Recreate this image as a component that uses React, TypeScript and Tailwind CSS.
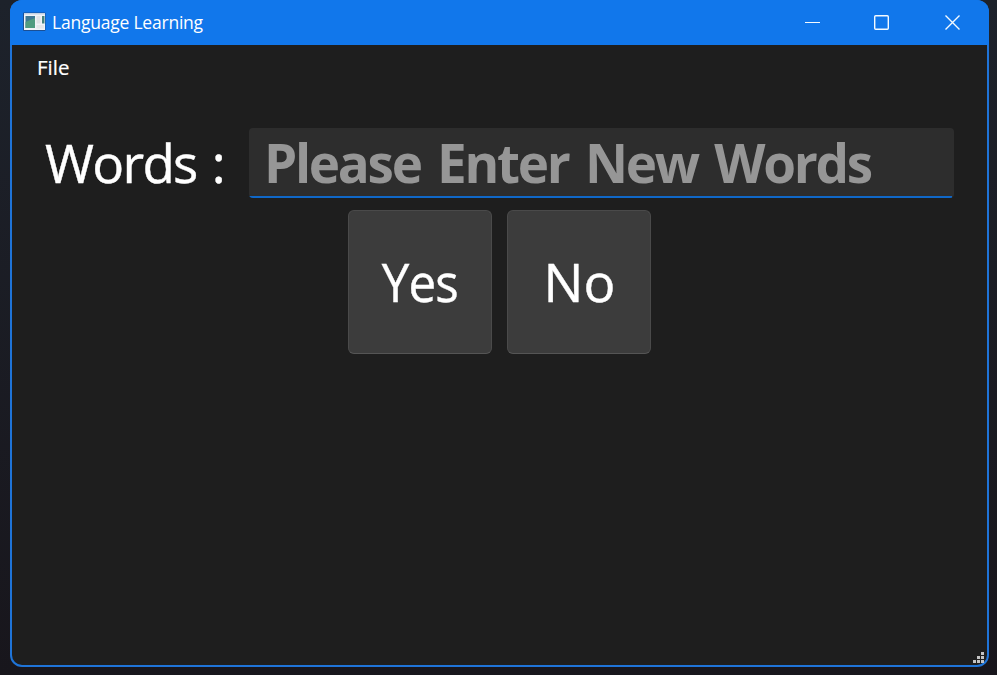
import React from "react";

function AppIcon() {
  return (
    <svg width="24" height="20" viewBox="0 0 24 20" className="shrink-0">
      <rect x="0" y="0.5" width="22.5" height="18.5" rx="1" fill="#1b4f94" />
      <rect x="1" y="1" width="21" height="17" fill="#f0f3f7" />
      <rect x="1" y="1" width="21" height="1.5" fill="#c3d2e4" />
      <rect x="2.5" y="4" width="9.5" height="12" fill="#3d7894" />
      <path d="M2.5 16V10L12 6v10z" fill="#4f9c80" />
      <rect x="13.5" y="4" width="4" height="7.5" fill="#e0e3e7" />
      <rect x="19" y="4" width="2.5" height="7.5" fill="#46837c" />
      <rect x="13.5" y="13" width="7.5" height="3.5" fill="#e4e7ea" />
    </svg>
  );
}

function TitleBar() {
  return (
    <header className="flex h-[45px] shrink-0 items-start bg-[#1177eb] pl-[13px] text-white">
      <div className="flex h-[45px] flex-1 items-start pt-[12px]">
        <AppIcon />
        <span className="ml-[5px] mt-[-2px] whitespace-nowrap text-[17.5px] leading-6 tracking-[-0.22px]">
          Language Learning
        </span>
      </div>
      <svg width="185" height="45" viewBox="0 0 185 45" fill="none" stroke="#f4faff">
        <path d="M1 22.5h15" />
        <rect x="70.7" y="15.7" width="13.6" height="13.6" rx="1" strokeWidth="1.4" />
        <path d="M141.5 15.5l14 14m0-14l-14 14" strokeWidth="1.4" />
      </svg>
    </header>
  );
}

function ChoiceButton({ children, textClass }: { children: React.ReactNode; textClass: string }) {
  return (
    <button className="flex h-36 w-36 items-center justify-center rounded-[6px] border border-[#4a4a4a] border-b-[#555555] bg-[#3c3c3c] pb-[2px] text-[53px] leading-none [-webkit-text-stroke:0.4px_white]">
      <span className={textClass}>{children}</span>
    </button>
  );
}

function SizeGrip() {
  return (
    <svg width="11" height="11" viewBox="0 0 11 11" fill="#c4c4c4">
      <path d="M8 0h3v3H8zM4 4h3v3H4zM8 4h3v3H8zM0 8h3v3H0zM4 8h3v3H4zM8 8h3v3H8z" />
    </svg>
  );
}

export default function App() {
  return (
    <div className="h-[675px] w-[997px] overflow-hidden bg-[#1a1d25] bg-linear-to-b from-[#1d222b] to-[#18161c] pl-[10px] font-['Open_Sans','Noto_Sans',sans-serif] text-white">
      <div className="flex h-[667px] w-[979px] flex-col overflow-hidden rounded-[12px] bg-[#1f74d8]">
        <TitleBar />
        <main className="mx-[2px] mb-[2px] flex flex-1 flex-col rounded-b-[10px] bg-[#1e1e1e]">
          <nav className="flex h-[45px] pl-[25px]">
            <span className="text-[20.5px] leading-[45px] [-webkit-text-stroke:0.2px_white]">File</span>
          </nav>
          <div className="mt-[38px] flex h-[70px] items-center pl-[33px]">
            <label className="w-[204px] whitespace-nowrap text-[53px] leading-[70px] tracking-[-1.7px] [-webkit-text-stroke:0.4px_white] [word-spacing:3px]">
              Words :
            </label>
            <div className="flex h-[70px] w-[705px] items-center rounded-[4px] bg-[linear-gradient(#1068c8,#1068c8)] bg-[#2d2d2d] bg-[length:703px_2px] bg-[position:0_100%] bg-no-repeat pl-[15px]">
              <span className="whitespace-nowrap text-[53px] font-bold leading-[70px] tracking-[-2.3px] text-[#969696] [word-spacing:5px]">
                Please Enter New Words
              </span>
            </div>
          </div>
          <div className="mt-[12px] flex gap-[15px] pl-[336px]">
            <ChoiceButton textClass="inline-block scale-x-[0.93] tracking-[-1px]">Yes</ChoiceButton>
            <ChoiceButton textClass="tracking-[0px] ml-[1px]">No</ChoiceButton>
          </div>
          <footer className="mt-auto flex justify-end pb-[2px] pr-[3px]">
            <SizeGrip />
          </footer>
        </main>
      </div>
    </div>
  );
}
